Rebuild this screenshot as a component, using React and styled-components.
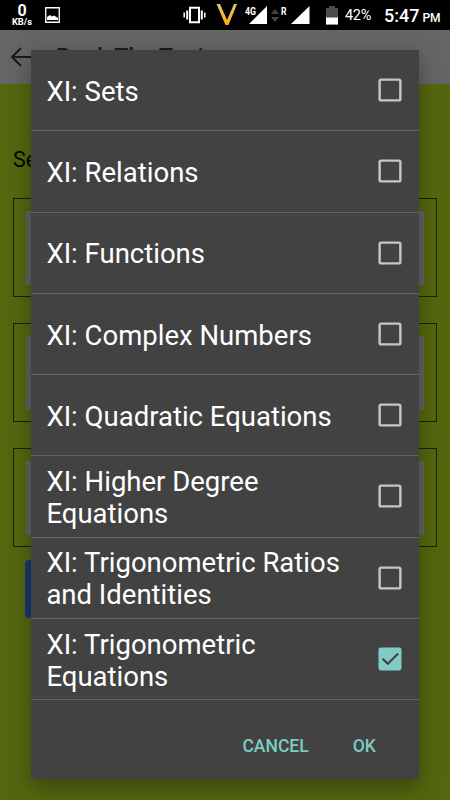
import React from 'react';
import styled, { createGlobalStyle } from 'styled-components';

const GlobalStyle = createGlobalStyle`
  * { box-sizing: border-box; }
  body {
    margin: 0;
    font-family: Roboto, sans-serif;
    overflow: hidden;
  }
`;

const Screen = styled.div`
  position: relative;
  width: 450px;
  height: 800px;
  overflow: hidden;
  background: #54670f;
`;

const StatusBar = styled.header`
  display: flex;
  align-items: center;
  height: 30px;
  padding-left: 11px;
  background: #000;
  color: #fff;
`;

const NetSpeed = styled.div`
  display: flex;
  flex-direction: column;
  align-items: center;
  width: 22px;
  margin-right: 12px;
  font-size: 9.3px;
  font-weight: 700;
  line-height: 10px;
  white-space: nowrap;
`;

const NetSpeedValue = styled.span`
  font-size: 16px;
  line-height: 13px;
`;

const StatusIcon = styled.svg`
  flex: none;
  display: block;
  margin-left: ${({ gap }) => gap || 0}px;
`;

const Battery = styled.span`
  width: 28px;
  margin-left: 7px;
  padding-top: 1px;
  font-size: 14.5px;
  letter-spacing: -0.3px;
`;

const Clock = styled.span`
  margin-left: 11px;
  padding-top: 1px;
  font-size: 18px;
  font-weight: 500;
  white-space: nowrap;
`;

const Meridiem = styled.small`
  margin-left: 3px;
  font-size: 12px;
`;

const AppBar = styled.div`
  display: flex;
  align-items: center;
  height: 54px;
  padding-left: 10px;
  background: #656565;
  color: #1b1b1b;
`;

const Title = styled.h1`
  margin: 0 0 0 24px;
  font-size: 23.2px;
  font-weight: 500;
`;

const Page = styled.main`
  padding: 62px 13px 0;
`;

const Label = styled.div`
  height: 52px;
  font-size: 21.5px;
  line-height: 28px;
  color: #050600;
`;

const Field = styled.div`
  height: 99px;
  margin-bottom: 26px;
  padding: 12px;
  border: 1px solid #1b2204;
`;

const FieldInput = styled.div`
  height: 74px;
  background: #646464;
`;

const Submit = styled.div`
  width: 300px;
  height: 58px;
  margin: -13px 12px 0;
  border-radius: 4px;
  background: #183a70;
`;

const Dialog = styled.section`
  position: absolute;
  top: 50px;
  left: 31.4px;
  width: 387.4px;
  height: 729px;
  border-radius: 1px;
  background: #424242;
  box-shadow: 0 8px 22px rgba(0, 0, 0, 0.34);
`;

const Option = styled.div`
  display: flex;
  align-items: center;
  justify-content: space-between;
  height: 81.25px;
  padding: 0 16.8px 0 15px;
  border-bottom: 1px solid #626262;
  color: #fff;
`;

const OptionLabel = styled.span`
  width: 315px;
  padding-top: 3.5px;
  font-size: 27.5px;
  line-height: 32px;
`;

const Actions = styled.footer`
  display: flex;
  justify-content: flex-end;
  gap: 44px;
  padding: 35px 43px 0 0;
`;

const Action = styled.button`
  padding: 0;
  border: 0;
  background: none;
  color: #80cbc4;
  font: 500 17.5px/22px Roboto, sans-serif;
`;

const PictureIcon = () => (
  <StatusIcon width="15" height="16" viewBox="0 0 15 16">
    <path d="M.75.75h13.5v14.5H.75z" fill="none" stroke="#fff" strokeWidth="1.3" />
    <path d="M2 13V10l3-2 2 1.5 2-1 4 2.5v2z" fill="#fff" />
  </StatusIcon>
);

const VibrateIcon = () => (
  <StatusIcon gap={123} width="23" height="18" viewBox="0 0 23 18">
    <path d="M7 1.7h9v14.6H7zM4.2 4.5v9M18.8 4.5v9" fill="none" stroke="#fff" strokeWidth="2" />
    <path d="M1.2 6.5v5M21.8 6.5v5" stroke="#fff" strokeWidth="1.5" />
  </StatusIcon>
);

const CarrierIcon = () => (
  <StatusIcon gap={10} width="22" height="23" viewBox="0 0 22 23">
    <defs>
      <linearGradient id="carrier" x1="0" y1="0" x2="0" y2="1">
        <stop offset="0" stopColor="#e8c65c" />
        <stop offset="1" stopColor="#ffab10" />
      </linearGradient>
    </defs>
    <path d="M.5 0H4l7 16L18 0h3L12.5 21H9.5z" fill="url(#carrier)" />
  </StatusIcon>
);

const SignalIcons = () => (
  <StatusIcon gap={7} width="68" height="22" viewBox="0 0 68 22" fill="#fff">
    <path d="M22 2v18H4zM64.5 2v18H46z" />
    <text x="0" y="10.5" fontSize="10.5" fontWeight="700" stroke="#000" strokeWidth="2" paintOrder="stroke" textLength="11" lengthAdjust="spacingAndGlyphs">4G</text>
    <path d="M26 10l4-5 4 5zM26 13l4 5 4-5z" fill="#444" />
    <text x="36" y="10.5" fontSize="10.5" fontWeight="700" textLength="5.5" lengthAdjust="spacingAndGlyphs">R</text>
  </StatusIcon>
);

const BatteryIcon = () => (
  <StatusIcon gap={13} width="12" height="19" viewBox="0 0 12 19">
    <path d="M3 0h6v2h3v16.5H0V2h3z" fill="#4b4b4b" />
    <path d="M0 11.5h12v7H0z" fill="#fff" />
  </StatusIcon>
);

const BackIcon = () => (
  <StatusIcon width="22" height="20" viewBox="0 0 22 20" fill="none" stroke="currentColor" strokeWidth="2">
    <path d="M11 1L2 10l9 9M2 10h19" />
  </StatusIcon>
);

const Checkbox = ({ checked }) => (
  <StatusIcon width="24" height="24" viewBox="0 0 25 25" fill="none">
    {checked ? (
      <>
        <rect x=".5" y=".5" width="24" height="24" rx="2.5" fill="#80cbc4" />
        <path d="M4.8 12.2l5.4 5.3L21 6.8" stroke="#424242" strokeWidth="2.3" />
      </>
    ) : (
      <rect x="1.7" y="1.7" width="21.6" height="21.6" rx="1.5" stroke="#c6c6c6" strokeWidth="2.5" />
    )}
  </StatusIcon>
);

const topics = [
  { title: 'XI: Sets' },
  { title: 'XI: Relations' },
  { title: 'XI: Functions' },
  { title: 'XI: Complex Numbers' },
  { title: 'XI: Quadratic Equations' },
  { title: 'XI: Higher Degree Equations' },
  { title: 'XI: Trigonometric Ratios and Identities' },
  { title: 'XI: Trigonometric Equations', checked: true },
];

const App = () => (
  <Screen>
    <GlobalStyle />
    <StatusBar>
      <NetSpeed>
        <NetSpeedValue>0</NetSpeedValue>
        KB/s
      </NetSpeed>
      <PictureIcon />
      <VibrateIcon />
      <CarrierIcon />
      <SignalIcons />
      <BatteryIcon />
      <Battery>42%</Battery>
      <Clock>5:47<Meridiem>PM</Meridiem></Clock>
    </StatusBar>
    <AppBar>
      <BackIcon />
      <Title>Book The Topic</Title>
    </AppBar>
    <Page>
      <Label>Select</Label>
      <Field><FieldInput /></Field>
      <Field><FieldInput /></Field>
      <Field><FieldInput /></Field>
      <Submit />
    </Page>
    <Dialog>
      {topics.map(({ title, checked }) => (
        <Option key={title}>
          <OptionLabel>{title}</OptionLabel>
          <Checkbox checked={checked} />
        </Option>
      ))}
      <Actions>
        <Action>CANCEL</Action>
        <Action>OK</Action>
      </Actions>
    </Dialog>
  </Screen>
);

export default App;
